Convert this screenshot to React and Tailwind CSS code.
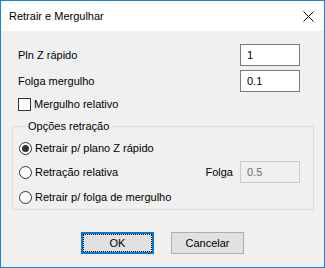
import React, { useState } from 'react';

const font = { fontFamily: '"Liberation Sans", Arial, sans-serif' };

const Radio = ({ checked, label, onClick }) => (
  <label className="flex items-center gap-[3px] cursor-default" onClick={onClick}>
    <span className="w-[13px] h-[13px] rounded-full border border-[#333333] bg-white flex items-center justify-center">
      {checked && <span className="w-[7px] h-[7px] rounded-full bg-[#333333]" />}
    </span>
    <span>{label}</span>
  </label>
);

export default function App() {
  const [retract, setRetract] = useState(0);
  const [relative, setRelative] = useState(false);

  return (
    <div
      className="w-[325px] h-[268px] border border-[#1883d7] bg-[#f0f0f0] flex flex-col text-[11px] text-black overflow-hidden"
      style={font}
    >
      {/* Barra de título */}
      <div className="h-[30px] bg-white flex items-center justify-between pl-[8px] pr-[10px] shrink-0">
        <span>Retrair e Mergulhar</span>
        <svg width="11" height="11" viewBox="0 0 11 11">
          <path d="M0.5 0.5 L10.5 10.5 M10.5 0.5 L0.5 10.5" stroke="#000" strokeWidth="1" />
        </svg>
      </div>

      {/* Campos superiores */}
      <div className="flex flex-col gap-[4px] pl-[17px] pr-[24px] mt-[13px]">
        <div className="flex items-center justify-between h-[22px]">
          <span>Pln Z rápido</span>
          <input
            defaultValue="1"
            className="w-[60px] h-[22px] border border-[#7a7a7a] bg-white px-[6px] outline-none"
          />
        </div>
        <div className="flex items-center justify-between h-[22px]">
          <span>Folga mergulho</span>
          <input
            defaultValue="0.1"
            className="w-[60px] h-[22px] border border-[#7a7a7a] bg-white px-[6px] outline-none"
          />
        </div>
      </div>

      <label
        className="flex items-center gap-[3px] pl-[17px] mt-[6px] h-[13px]"
        onClick={() => setRelative(!relative)}
      >
        <span className="w-[13px] h-[13px] border border-[#333333] bg-white flex items-center justify-center">
          {relative && (
            <svg width="9" height="9" viewBox="0 0 9 9">
              <path d="M1 4.5 L3.5 7 L8 1.5" stroke="#000" strokeWidth="1.3" fill="none" />
            </svg>
          )}
        </span>
        <span>Mergulho relativo</span>
      </label>

      {/* Opções retração */}
      <fieldset className="ml-[11px] mr-[10px] mt-[7px] border border-[#dcdcdc] pl-[6px] pr-[13px] pb-0 h-[92px]">
        <legend className="ml-[7px] px-[2px] leading-[16px]">Opções retração</legend>
        <div className="flex flex-col mt-[3px]">
          <div className="h-[22px] flex items-center">
            <Radio checked={retract === 0} label="Retrair p/ plano Z rápido" onClick={() => setRetract(0)} />
          </div>
          <div className="h-[22px] mt-[2px] flex items-center justify-between">
            <Radio checked={retract === 1} label="Retração relativa" onClick={() => setRetract(1)} />
            <div className="flex items-center gap-[7px]">
              <span>Folga</span>
              <input
                disabled
                defaultValue="0.5"
                className="w-[60px] h-[22px] border border-[#cccccc] bg-[#f0f0f0] text-[#6d6d6d] px-[6px] outline-none"
              />
            </div>
          </div>
          <div className="h-[22px] mt-[3px] flex items-center">
            <Radio checked={retract === 2} label="Retrair p/ folga de mergulho" onClick={() => setRetract(2)} />
          </div>
        </div>
      </fieldset>

      {/* Botões */}
      <div className="flex justify-center gap-[17px] mt-[22px]">
        <button className="w-[73px] h-[22px] border-2 border-[#0078d7] bg-[#e1e1e1] p-0">
          <span className="flex items-center justify-center w-full h-full border border-dotted border-black">
            OK
          </span>
        </button>
        <button className="w-[73px] h-[22px] border border-[#adadad] bg-[#e1e1e1]">Cancelar</button>
      </div>
    </div>
  );
}
